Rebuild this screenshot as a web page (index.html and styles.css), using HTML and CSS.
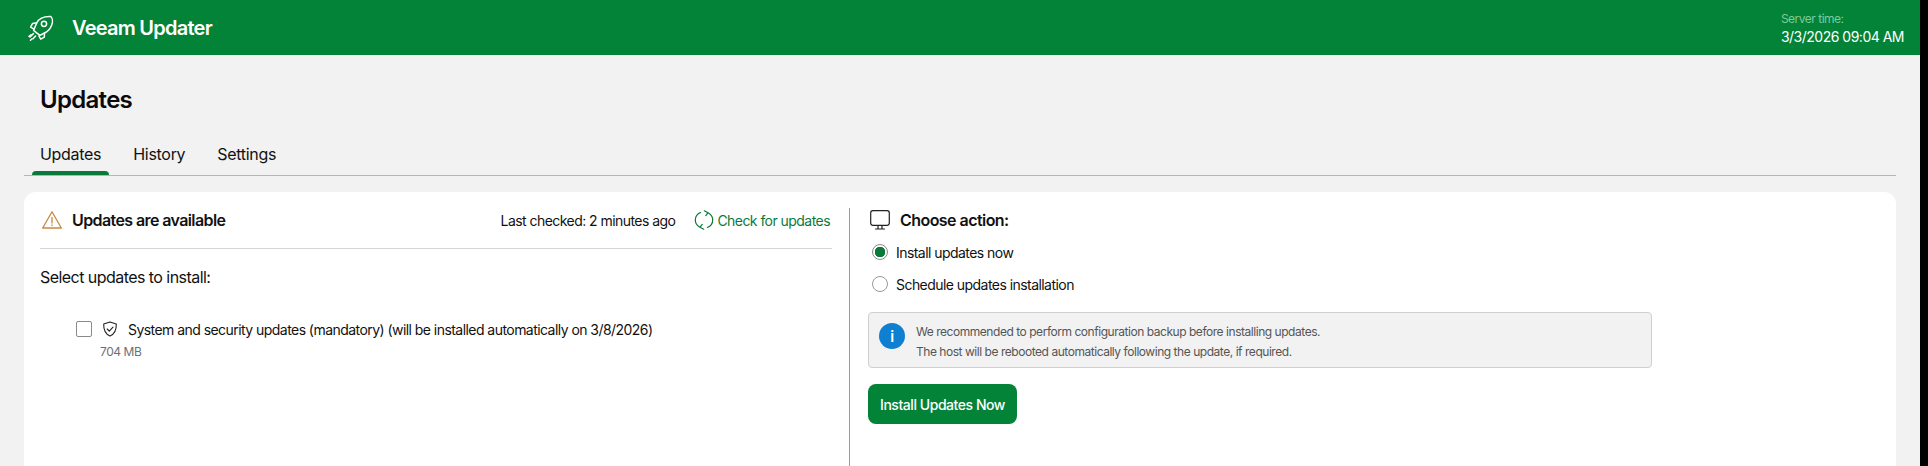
FILE: index.html
```html
<!DOCTYPE html>
<html lang="en">
<head>
<meta charset="utf-8">
<title>Veeam Updater</title>
<link rel="stylesheet" href="styles.css">
</head>
<body>
<div class="app">
  <header class="topbar">
    <div class="brand">
      <svg class="rocket" viewBox="0 0 26 26" fill="none" stroke="#fff" stroke-width="1.5" stroke-linecap="round" stroke-linejoin="round">
        <path d="M9 18.200 5.600 15.400 8.800 7.800C10.800 3.600 15.500 1.200 22.600 1.400c2 1.500 2.300 5.300 1.200 8.300-1.200 3.500-3.800 6.800-7.300 8.300L12 20.400z"/>
        <circle cx="16" cy="8.800" r="2.600"/>
        <path d="M8.800 7.800 4.500 8.600 2.600 12.200 6 14.200M16.500 18l-.2 4.200-3.600 2-1.800-3.200"/>
        <path d="M5.400 18.600 2 22M7.600 21 5 23.800M3 19.800 1 21.400M3.800 24 2.500 25.200"/>
      </svg>
      <span class="brand-name">Veeam Updater</span>
    </div>
    <div class="server">
      <div class="server-label">Server time:</div>
      <div class="server-value">3/3/2026 09:04 AM</div>
    </div>
  </header>

  <main class="content">
    <h1 class="page-title">Updates</h1>
    <nav class="tabs">
      <a class="tab active">Updates</a>
      <a class="tab">History</a>
      <a class="tab">Settings</a>
    </nav>

    <section class="card">
      <div class="left">
        <div class="status-row">
          <svg class="warn" viewBox="0 0 20 20" fill="none" stroke="#c68a3f" stroke-width="1.300" stroke-linejoin="round" stroke-linecap="round">
            <path d="M10 1.800 19.300 18H.7z"/>
            <path d="M10 7.500v5.500M10 15v.6"/>
          </svg>
          <span class="status-title">Updates are available</span>
          <span class="checked">Last checked: 2 minutes ago</span>
          <a class="check-link">
            <svg class="refresh" viewBox="0 0 20 20" fill="none" stroke="#0a7a3a" stroke-width="1.200" stroke-linecap="round" stroke-linejoin="round">
              <path d="M6.600 2.500C3.400 3.800 1.300 6.700 1.300 10c0 3 1.700 5.600 4.200 7"/>
              <path d="M13.400 17.500c3.200-1.300 5.300-4.200 5.300-7.500 0-3-1.700-5.600-4.200-7"/>
              <path d="M10.300.8 13.900 2.800 11.800 5.600M9.700 19.200 6.100 17.200 8.200 14.400"/>
            </svg>
            Check for updates
          </a>
        </div>
        <p class="select-label">Select updates to install:</p>
        <div class="update-row">
          <span class="checkbox"></span>
          <svg class="shield" viewBox="0 0 16 16" fill="none" stroke="#222" stroke-width="1.100" stroke-linecap="round" stroke-linejoin="round">
            <path d="M8 .9 14.300 3c.2 6-1.600 10-6.300 12.100C3.300 13 1.500 9 1.700 3z"/>
            <path d="m5.200 8 2.100 2.100 3.700-4"/>
          </svg>
          <span class="update-name">System and security updates (mandatory) (will be installed automatically on 3/8/2026)</span>
        </div>
        <div class="update-size">704 MB</div>
      </div>

      <div class="right">
        <div class="action-head">
          <svg class="monitor" viewBox="0 0 20 20" fill="none" stroke="#222" stroke-width="1.200" stroke-linecap="round" stroke-linejoin="round">
            <rect x=".7" y=".7" width="18.600" height="14.600" rx="2.200"/>
            <path d="M8 15.500v3M12 15.500v3M5.500 19h9"/>
          </svg>
          <span class="action-title">Choose action:</span>
        </div>
        <label class="radio-row first"><span class="radio on"></span>Install updates now</label>
        <label class="radio-row"><span class="radio"></span>Schedule updates installation</label>
        <div class="notice">
          <span class="info-icon">i</span>
          <div class="notice-text">
            <div>We recommended to perform configuration backup before installing updates.</div>
            <div>The host will be rebooted automatically following the update, if required.</div>
          </div>
        </div>
        <button class="primary">Install Updates Now</button>
      </div>
    </section>
  </main>
</div>
</body>
</html>
```
FILE: styles.css
```css
* { box-sizing: border-box; }
html, body { margin: 0; height: 100%; background: #000; overflow: hidden; }
body { font-family: Inter, "Liberation Sans", sans-serif; color: #111; letter-spacing: -.55px; }
.app { width: 1920px; height: 466px; background: #f2f2f2; overflow: hidden; }

.topbar {
  height: 55px; background: #038337; color: #fff;
  display: flex; align-items: center; justify-content: space-between;
  padding: 0 16px 0 28px;
}
.brand { display: flex; align-items: center; gap: 18px; }
.rocket { width: 26px; height: 26px; display: block; }
.brand-name { font-size: 20px; font-weight: 600; letter-spacing: -.75px; }
.server { white-space: nowrap; }
.server-label { font-size: 12px; line-height: 18px; color: #7fc99b; letter-spacing: -.5px; }
.server-value { font-size: 14px; line-height: 18px; letter-spacing: -.5px; }

.content { padding: 0 24px; }
.page-title { margin: 0; padding: 30px 0 0 16px; height: 83px; font-size: 24px; line-height: 30px; font-weight: 600; color: #0a0a0a; letter-spacing: -.7px; }
.tabs { display: flex; height: 38px; border-bottom: 1px solid #b5b5b5; padding-left: 8px; }
.tab { padding: 4px 8px 0; margin-right: 16px; font-size: 16px; line-height: 24px; position: relative; height: 37px; letter-spacing: -.3px; }
.tab.active::after {
  content: ""; position: absolute; left: 0; right: 0; bottom: 0; height: 4px;
  background: #0a7a3a; border-radius: 4px 4px 0 0;
}

.card {
  margin-top: 16px; height: 300px; background: #fff; border-radius: 12px;
  display: flex; padding: 16px 0 0 16px;
}
.left { width: 792px; font-size: 14px; }
.status-row {
  display: flex; align-items: center; padding-bottom: 16px;
  border-bottom: 1px solid #d4d4d4; height: 41px;
}
.warn { width: 20px; height: 20px; margin: 0 10px 0 2px; }
.status-title { font-size: 16px; font-weight: 600; letter-spacing: -.6px; }
.checked { margin-left: auto; }
.check-link { display: flex; align-items: center; color: #0a7a3a; margin: 0 2px 0 19px; }
.refresh { width: 20px; height: 20px; margin-right: 3px; }
.select-label { margin: 16px 0 0; font-size: 16px; line-height: 24px; letter-spacing: -.55px; }
.update-row { display: flex; align-items: center; height: 20px; margin: 30px 0 0 36px; }
.checkbox { width: 16px; height: 16px; border: 1px solid #8a8a8a; border-radius: 2px; background: #fff; }
.shield { width: 16px; height: 16px; margin: 0 10px; }
.update-name { font-size: 14px; }
.update-size { margin: 4px 0 0 60px; font-size: 12px; line-height: 18px; color: #6f6f6f; letter-spacing: -.45px; }

.right { flex: 1; margin: 0 0 0 17px; padding: 0 0 0 18px; border-left: 1px solid #9c9c9c; font-size: 14px; }
.action-head { display: flex; align-items: center; height: 24px; padding-left: 2px; }
.monitor { width: 20px; height: 20px; display: block; }
.action-title { margin-left: 10px; font-size: 16px; font-weight: 600; letter-spacing: -.55px; }
.radio-row { display: flex; align-items: center; height: 32px; padding-left: 4px; }
.radio-row.first { margin-top: 4px; }
.radio { width: 16px; height: 16px; border: 1px solid #9a9a9a; border-radius: 50%; margin-right: 8px; background: #fff; }
.radio.on { border-color: #8a8a8a; background: radial-gradient(circle, #0a7a3a 0 5px, #fff 5.500px); }
.notice {
  width: 784px; height: 56px; margin-top: 12px; background: #f2f2f2;
  border: 1px solid #d0d0d0; border-radius: 4px;
  display: flex; align-items: flex-start; padding: 10px;
}
.info-icon {
  width: 26px; height: 26px; border-radius: 50%; background: #0f7fd1; color: #fff;
  display: flex; align-items: center; justify-content: center;
  font-size: 15px; font-weight: 600; flex: none;
}
.notice-text { margin: -1px 0 0 11px; font-size: 12px; line-height: 20px; color: #555; letter-spacing: -.46px; }
.primary {
  display: block; margin-top: 16px; height: 40px; width: 149px; padding: 0;
  border: 0; border-radius: 8px; background: #038337; color: #fff;
  font: 500 14px Inter, "Liberation Sans", sans-serif; letter-spacing: -.45px;
}
```
